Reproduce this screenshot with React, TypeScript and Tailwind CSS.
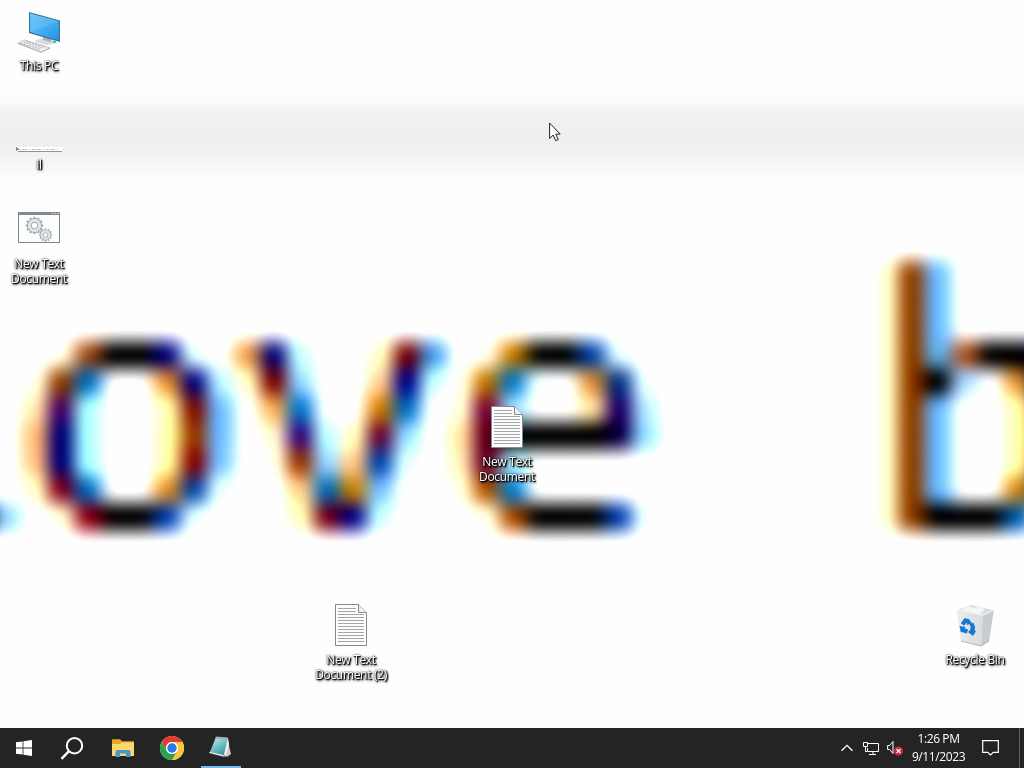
import React from 'react';

const CELL_W = 26.57;
const CELL_H = 27;

// Wallpaper cells: row number -> [column, colour]
const WALLPAPER: Record<number, [number, string][]> = {
  0: [[33, '#ffffd0'], [34, '#8b3c00'], [35, '#66b5ff']],
  1: [[33, '#ffffd0'], [34, '#8b3c00'], [35, '#66b5ff']],
  2: [[33, '#ffffd0'], [34, '#8b3c00'], [35, '#66b5ff']],
  3: [
    [2, '#fffbe4'], [3, '#9c4814'], [4, '#000'], [5, '#000'], [6, '#000078'], [7, '#dcffff'],
    [9, '#e09440'], [10, '#000070'], [11, '#c0ffff'], [14, '#ffffc0'], [15, '#6e0000'], [16, '#3a90d8'],
    [18, '#fff8e8'], [19, '#c07800'], [20, '#000'], [21, '#000'], [22, '#0040a0'], [23, '#e0fbff'],
    [33, '#ffffd0'], [34, '#8b3c00'], [35, '#60b0e8'], [36, '#a85020'], [37, '#000'], [38, '#000'], [39, '#000060'],
  ],
  4: [
    [1, '#ffffe4'], [2, '#8b3c00'], [3, '#0066b8'], [6, '#dc8c2c'], [7, '#000078'], [8, '#b8f0ff'],
    [9, '#ffffc0'], [10, '#700000'], [11, '#90d0ff'], [14, '#ffc890'], [15, '#000080'], [16, '#c0ffff'],
    [17, '#ffffe8'], [18, '#b87000'], [19, '#0070c0'], [20, '#f0ffff'], [22, '#d08830'], [23, '#003080'], [24, '#e4ffff'],
    [33, '#ffffd0'], [34, '#8b3c00'], [35, '#000'], [36, '#a0d0ff'], [38, '#d89030'], [39, '#000078'],
  ],
  5: [
    [1, '#ffe0a8'], [2, '#40005c'], [3, '#a8ffff'], [6, '#ffffb0'], [7, '#7a1000'], [8, '#66b5ff'],
    [10, '#f0a850'], [11, '#0070c0'], [14, '#c87800'], [15, '#0068b8'],
    [17, '#ffffd0'], [18, '#700030'], [19, '#a0e0ff'], [22, '#ffe0a0'], [23, '#200060'], [24, '#b0e0ff'],
    [33, '#ffffd0'], [34, '#8b3c00'], [35, '#66b5ff'], [38, '#ffffa8'], [39, '#7a1000'],
  ],
  6: [
    [1, '#ffb470'], [2, '#00006e'], [3, '#a8ffff'], [6, '#ffffa8'], [7, '#903a00'], [8, '#66b5ff'],
    [10, '#fff0c8'], [11, '#300070'], [12, '#b5ffff'], [13, '#ffffb5'], [14, '#600030'], [15, '#90d8ff'],
    [17, '#ffdc9c'], [18, '#600020'], [19, '#000'], [20, '#000'], [21, '#000'], [22, '#000'], [23, '#100040'], [24, '#90d8ff'],
    [33, '#ffffd0'], [34, '#8b3c00'], [35, '#66b5ff'], [38, '#ffffa8'], [39, '#903a00'],
  ],
  7: [
    [1, '#ffbc7c'], [2, '#000070'], [3, '#a8ffff'], [6, '#ffffa8'], [7, '#800000'], [8, '#74bcff'],
    [10, '#ffffe0'], [11, '#903000'], [12, '#90d0ff'], [13, '#ffc080'], [14, '#0040a0'], [15, '#d8ffff'],
    [17, '#ffe8b0'], [18, '#600028'], [19, '#b0f0ff'],
    [33, '#ffffd0'], [34, '#8b3c00'], [35, '#66b5ff'], [38, '#ffffa8'], [39, '#7a1000'],
  ],
  8: [
    [1, '#ffffc0'], [2, '#800018'], [3, '#0068b8'], [6, '#d88a20'], [7, '#0040a0'], [8, '#e0ffff'],
    [11, '#ffc880'], [12, '#0068b8'], [13, '#c88000'], [14, '#70b8ff'],
    [17, '#ffffd8'], [18, '#a85000'], [19, '#0078c8'],
    [33, '#ffffd0'], [34, '#8b3c00'], [35, '#66b5ff'], [38, '#c88010'], [39, '#0040a0'],
  ],
  9: [
    [-2, '#000'], [-1, '#000'], [0, '#90d0ff'],
    [2, '#ffffd0'], [3, '#8b0010'], [4, '#000'], [5, '#000'], [6, '#003aa8'], [7, '#e0ffff'],
    [11, '#ffffb5'], [12, '#700010'], [13, '#000080'], [14, '#c0ffff'],
    [18, '#ffffe0'], [19, '#a84800'], [20, '#000'], [21, '#000'], [22, '#000'], [23, '#0038a0'], [24, '#e8ffff'],
    [33, '#ffffd0'], [34, '#8b3c00'], [35, '#000'], [36, '#000'], [37, '#000'], [38, '#0058a8'], [39, '#e0ffff'],
  ],
};

const Wallpaper: React.FC = () => (
  <div className="absolute inset-0 overflow-hidden bg-[#fefefe]">
    <div className="absolute inset-x-0 top-[90px] h-[96px] bg-[linear-gradient(to_bottom,#fefefe_0%,#f9f9f9_14%,#f0f0f0_26%,#efefef_60%,#f5f5f5_75%,#fbfbfb_88%,#fefefe_100%)]" />
    <svg
      className="absolute left-[-60px] top-0 bg-white mix-blend-multiply blur-[9px] contrast-[1.22]"
      width="1160"
      height="800"
      viewBox="-60 0 1160 800"
    >
      {Object.entries(WALLPAPER).map(([row, cells]) =>
        cells.map(([col, color]) => (
          <rect
            key={`${row}-${col}`}
            x={8 + (col - 0.5) * CELL_W}
            y={274 + (Number(row) - 0.5) * CELL_H}
            width={CELL_W + 0.3}
            height={CELL_H + 0.3}
            fill={color}
          />
        ))
      )}
    </svg>
  </div>
);

const ThisPcIcon = () => (
  <svg width="48" height="48" viewBox="0 0 48 48">
    <defs>
      <linearGradient id="screen" x1="0" y1="0" x2="1" y2="1">
        <stop offset="0" stopColor="#5cc0f8" />
        <stop offset="0.5" stopColor="#45b0f3" />
        <stop offset="1" stopColor="#2492e0" />
      </linearGradient>
    </defs>
    <path d="M21 32l9-2 11 3-4 3-6 1-11-3z" fill="#d8dbdd" />
    <path d="M28 28l8 2v4l-8-2z" fill="#a9b1b7" />
    <path d="M14 4L45 12.500V34L14 25z" fill="#3b6f96" />
    <path d="M15 5.300L44 13.300V32.500L15 24z" fill="url(#screen)" />
    <path d="M15 5.300L44 13.300 16 24z" fill="#ffffff" opacity="0.1" />
    <path d="M38 33l3-.5v2.500l-3 .3z" fill="#37d39a" />
    <path d="M3 35l6-3 26 8-9 4z" fill="#f2f3f4" stroke="#b4b8bb" strokeWidth="0.8" />
    <path d="M6 35.200l20 6.300M8.500 34l20 6.300M11 33l20 6.300" stroke="#a3a8ac" strokeWidth="0.9" strokeDasharray="2 1" />
    <path d="M3 35.500l23 8.700 9-4" fill="none" stroke="#a0a4a8" strokeWidth="0.8" />
  </svg>
);

const StripIcon = () => (
  <svg width="48" height="48" viewBox="0 0 48 48">
    <path d="M1 40h46v5H1z" fill="#fff" />
    <path d="M1.500 40v4M47 44.500H3" stroke="#8d9297" strokeWidth="1" fill="none" />
    <path d="M3 42.500h42" stroke="#b9c6cc" strokeWidth="1" strokeDasharray="3 1 5 2 1 2" />
    <path d="M1.500 41h2v2h-2z" fill="#5b8f91" />
  </svg>
);

const Gear: React.FC<{ cx: number; cy: number; r: number }> = ({ cx, cy, r }) => (
  <g transform={`translate(${cx} ${cy})`}>
    {Array.from({ length: 12 }).map((_, i) => (
      <rect key={i} x={-r * 0.13} y={-r * 1.25} width={r * 0.26} height={r * 0.4} transform={`rotate(${i * 30})`} fill="#97a3ad" />
    ))}
    <circle r={r * 0.72} fill="none" stroke="#96a3ae" strokeWidth={r * 0.68} />
    <circle r={r * 0.72} fill="none" stroke="#dde4e9" strokeWidth={r * 0.46} />
  </g>
);

const BatchIcon = () => (
  <svg width="48" height="48" viewBox="0 0 48 48">
    <rect x="3.500" y="6.500" width="41" height="30" fill="#fcfdfd" stroke="#80868b" />
    <path d="M3 6h42v3H3z" fill="#83898e" />
    <path d="M36 7.500h2m1 0h2m1 0h2" stroke="#c5c8ca" />
    <Gear cx={19.5} cy={19.5} r={7} />
    <Gear cx={30.5} cy={29} r={5.3} />
  </svg>
);

const TextFileIcon = () => (
  <svg width="48" height="48" viewBox="0 0 48 48">
    <path d="M8.500 2.500h23l8 8v33h-31z" fill="#fdfdfd" stroke="#85898c" />
    <path d="M31.500 2.500v8h8" fill="#f0f1f2" stroke="#85898c" />
    <path
      d="M11 6.500h18M11 9.500h18M11 12.500h26M11 15.500h26M11 18.500h26M11 21.500h26M11 24.500h26M11 27.500h26M11 30.500h26M11 33.500h26M11 36.500h26M11 39.500h26"
      stroke="#a3a6a8"
    />
  </svg>
);

const RecycleBinIcon = () => (
  <svg width="48" height="48" viewBox="0 0 48 48">
    <defs>
      <linearGradient id="bin" x1="0" y1="0" x2="1" y2="0">
        <stop offset="0" stopColor="#e9ebed" />
        <stop offset="1" stopColor="#d9dcde" />
      </linearGradient>
    </defs>
    <path d="M6 8l14-5 22 5-10 6z" fill="#d9dbdd" />
    <path d="M10 8l7-4 6 2 6-2 5 4-5 4z" fill="#f5f6f7" />
    <path d="M6 8l26 5-2 31-20-5z" fill="url(#bin)" />
    <path d="M32 13l11-5-5 31-8 5z" fill="#c9cccf" />
    <path d="M6 8l26 5 11-5" fill="none" stroke="#f3f4f4" strokeWidth="1.200" />
    <path d="M10 39l20 5 8-5" fill="none" stroke="#b0b3b6" />
    <g fill="none" stroke="#1976d2" strokeWidth="4.200">
      <path d="M11.500 22.500l3-4 3.500 1" />
      <path d="M20.500 21.500l1.500 4-1 3" />
      <path d="M16.500 29.500l-5-1.500-.5-3" />
    </g>
    <path d="M17 16.500l4.500 5-6 1.500zM25 29l-3 5-5-4 3.500-3.500zM8 24l6.500 1-2.500 4z" fill="#1976d2" />
  </svg>
);

interface DesktopItem {
  id: string;
  lines: string[];
  icon: React.ReactNode;
  place: string;
}

const ITEMS: DesktopItem[] = [
  { id: 'pc', lines: ['This PC'], icon: <ThisPcIcon />, place: 'left-[2px] top-[8px]' },
  { id: 'strip', lines: ['il'], icon: <StripIcon />, place: 'left-[2px] top-[107px]' },
  { id: 'batch', lines: ['New Text', 'Document'], icon: <BatchIcon />, place: 'left-[2px] top-[206px]' },
  { id: 'txt', lines: ['New Text', 'Document'], icon: <TextFileIcon />, place: 'left-[470px] top-[404px]' },
  { id: 'txt2', lines: ['New Text', 'Document (2)'], icon: <TextFileIcon />, place: 'left-[314px] top-[602px]' },
  { id: 'bin', lines: ['Recycle Bin'], icon: <RecycleBinIcon />, place: 'left-[938px] top-[602px]' },
];

const Cursor = () => (
  <svg className="absolute left-[549px] top-[122px]" width="13" height="20" viewBox="0 0 13 20">
    <path d="M.6 1v15.500l3.600-3.400 2.400 5.500 2.600-1.100-2.400-5.400h4.400z" fill="#fff" stroke="#222" />
  </svg>
);

const ChromeIcon = () => (
  <svg width="24" height="24" viewBox="0 0 24 24">
    <circle cx="12" cy="12" r="12" fill="#fff" />
    <path d="M1.600 6A12 12 0 0 1 22.400 6H12a6 6 0 0 0-5.200 9z" fill="#e33b2e" />
    <path d="M22.400 6A12 12 0 0 1 12 24l5.200-9A6 6 0 0 0 12 6z" fill="#fcc934" />
    <path d="M12 24A12 12 0 0 1 1.600 6l5.200 9a6 6 0 0 0 10.400 0z" fill="#2da14c" />
    <circle cx="12" cy="12" r="5.900" fill="#fff" />
    <circle cx="12" cy="12" r="4.700" fill="#2b78e4" />
  </svg>
);

const FolderIcon = () => (
  <svg width="22" height="19" viewBox="0 0 22 19">
    <path d="M0 1Q0 .3 1 .3h7l2 2h11q1 0 1 1V17H0z" fill="#e5a827" />
    <path d="M0 5h8l2-1.500h12V17H0z" fill="#fbd76c" />
    <path d="M3.500 18v-5.500Q3.500 11 5 11h12q1.500 0 1.500 1.500V18H14v-3.500H8V18z" fill="#4a97c9" />
  </svg>
);

const NotepadIcon = () => (
  <svg width="24" height="24" viewBox="0 0 24 24">
    <defs>
      <linearGradient id="pad" x1="0" y1="0" x2="0.600" y2="1">
        <stop offset="0" stopColor="#c9eef0" />
        <stop offset="0.500" stopColor="#7fc6cd" />
        <stop offset="1" stopColor="#3c97a3" />
      </linearGradient>
    </defs>
    <path d="M18 2l4 17-4 3-3-4z" fill="#cfcbc4" />
    <path d="M0 18l1-1.500 13 3 2 2.500z" fill="#e8eceb" />
    <path d="M7 2l12 1-4 17L1 17z" fill="url(#pad)" />
    <path d="M7 1.500l12 1-.4 2L6.300 3.500z" fill="#a3adaf" />
    <path d="M19 3l-4 17 1.500 2L20 9z" fill="#f3f3f1" />
  </svg>
);

const Taskbar: React.FC = () => (
  <div className="relative flex h-10 items-stretch justify-between bg-[#242424] text-white">
    <div className="flex">
      <div className="flex w-12 items-center justify-center">
        <svg width="16" height="16" viewBox="0 0 16 16" fill="#fff">
          <path d="M0 2.300L6.600 1.400v6.200H0zM7.400 1.300L16 0v7.600H7.400zM0 8.400h6.600v6.200L0 13.700zM7.400 8.400H16V16l-8.600-1.300z" />
        </svg>
      </div>
      <div className="flex w-12 items-center justify-center">
        <svg width="24" height="23" viewBox="0 0 24 23" fill="none" stroke="#fff">
          <circle cx="14.500" cy="8.700" r="7.700" strokeWidth="2" />
          <path d="M9 14.200L1.500 21.800" strokeWidth="2.500" />
        </svg>
      </div>
      <div className="ml-[2px] flex w-[49px] items-center justify-center">
        <FolderIcon />
      </div>
      <div className="flex w-[49px] items-center justify-center">
        <ChromeIcon />
      </div>
      <div className="ml-[5px] flex w-10 items-center justify-center border-b-2 border-[#76b9ed]">
        <NotepadIcon />
      </div>
    </div>

    <div className="flex items-center">
      <svg width="12" height="8" viewBox="0 0 12 8" fill="none" stroke="#fff" strokeWidth="1.300">
        <path d="M.5 6.800L6 1.300l5.500 5.500" />
      </svg>
      <svg className="ml-[10px]" width="17" height="15" viewBox="0 0 17 15" fill="none" stroke="#fff">
        <path d="M5 2.500h10.500v8H4.500V7M10 10.500v3M6 13.500h7" />
        <path d="M.5 1.500h4v4h-4zM2.500 5.500v5h2" />
      </svg>
      <svg className="ml-[7px]" width="17" height="16" viewBox="0 0 17 16">
        <path d="M.6 5.500h2l3.400-4v12l-3.400-4h-2z" fill="none" stroke="#fff" />
        <circle cx="11.500" cy="11" r="4.600" fill="#cf2740" />
        <path d="M9.500 9l4 4M13.500 9l-4 4" stroke="#fff" strokeWidth="1.100" />
      </svg>
      <div className="ml-[7px] flex w-[55px] flex-col items-center whitespace-nowrap text-xs leading-[18px] tracking-[-0.4px]">
        <span>1:26 PM</span>
        <span>9/11/2023</span>
      </div>
      <svg className="ml-[16px]" width="17" height="16" viewBox="0 0 17 16" fill="none" stroke="#fff" strokeWidth="1.200">
        <path d="M.7.7h15.600v11.600h-5l-2.800 2.700-2.800-2.700h-5z" />
      </svg>
      <div className="ml-[20px] h-10 w-[5px] border-l border-[#5c5c5c]" />
    </div>
  </div>
);

export default function App() {
  return (
    <div className="flex h-screen w-screen flex-col overflow-hidden bg-white font-['Open_Sans','Noto_Sans',sans-serif]">
      <div className="relative flex-1">
        <Wallpaper />
        {ITEMS.map((item) => (
          <div key={item.id} className={`absolute flex w-[74px] flex-col items-center ${item.place}`}>
            {item.icon}
            <div className="mt-[2px] flex flex-col items-center whitespace-nowrap text-xs leading-[15px] tracking-[-0.32px] text-white [text-shadow:1px_1px_1px_#000,1px_1px_2px_#000,0_0_2px_#000,1px_2px_3px_#0008]">
              {item.lines.map((line) => (
                <span key={line}>{line}</span>
              ))}
            </div>
          </div>
        ))}
        <Cursor />
      </div>
      <Taskbar />
    </div>
  );
}
